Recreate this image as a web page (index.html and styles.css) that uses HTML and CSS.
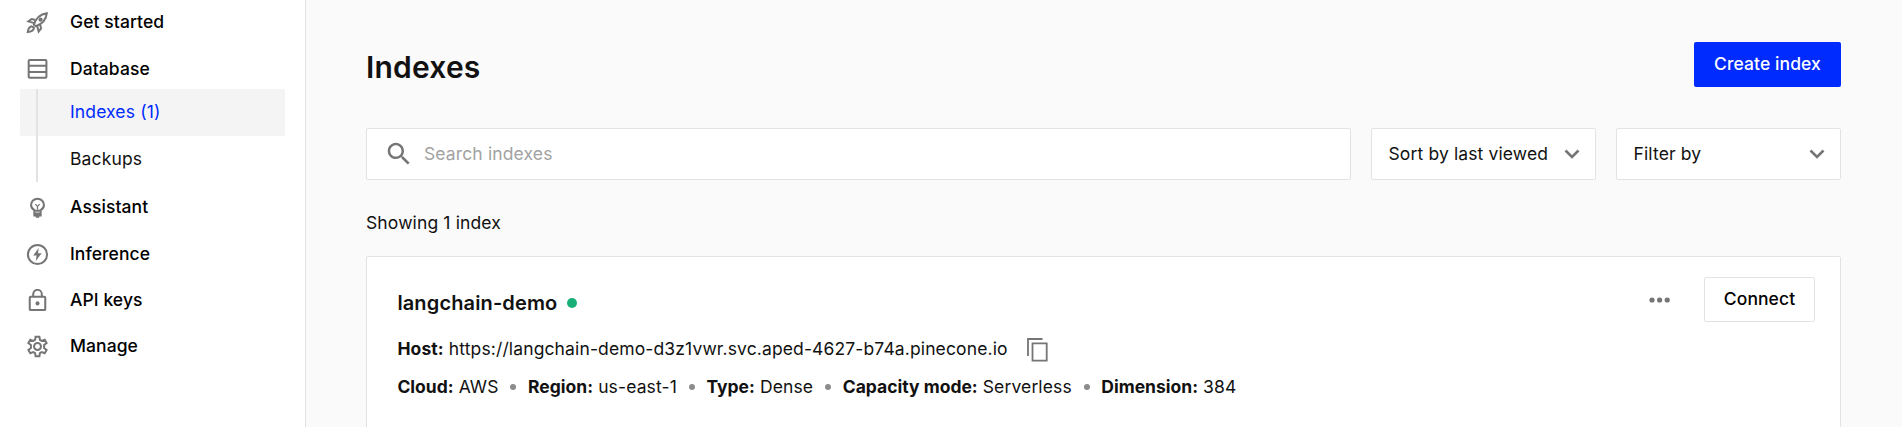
FILE: index.html
```html
<!DOCTYPE html>
<html lang="en">
<head>
<meta charset="utf-8">
<title>Indexes</title>
<link rel="stylesheet" href="styles.css">
</head>
<body>
<div class="app">
  <nav class="sidebar">
    <a class="item first"><svg class="icon" viewBox="0 0 24 24"><path d="M8.2 14.2C10.2 7.700 15 3.300 21.700 2.300C21 9 16.600 13.900 10.200 15.900ZM9.200 9.200L5.800 8.400L2.500 10.800L7.900 12.400M15 14.700L15.700 18.200L13.200 21.500L11.800 16.100M6.300 15.900C3.800 16.200 2.300 18.200 1.800 22C5.500 21.700 8 20.200 8.300 17.700L6.300 15.900"/><circle class="fill" cx="15.200" cy="9" r="2.200"/></svg><span>Get started</span></a>
    <a class="item database"><svg class="icon" viewBox="0 0 24 24"><rect x="2.800" y="2" width="18.500" height="18.500" rx="1"/><path d="M3 8.200H21M3 14.500H21"/></svg><span>Database</span></a>
    <div class="children">
      <a class="child active">Indexes (1)</a>
      <a class="child">Backups</a>
    </div>
    <a class="item assistant"><svg class="icon" viewBox="0 0 24 24"><path d="M8.800 15.400V14.800C6.700 13.800 5.300 12 5.300 9.500A6.700 6.700 0 0 1 18.700 9.500C18.700 12 17.300 13.800 15.200 14.800V15.400Z"/><path d="M8.700 16V20.300H15.300V16M8.700 18.200H15.300M10.200 21.700H13.800"/><path class="thin" d="M12 14.300V10.800M9.700 8.500L12 10.800L14.300 8.500"/></svg><span>Assistant</span></a>
    <a class="item"><svg class="icon" viewBox="0 0 24 24"><circle cx="12" cy="12" r="10"/><path class="fill" d="M13.200 5.200L7.500 13.100H11L10.200 18.900L16.400 10.600H12.600Z"/></svg><span>Inference</span></a>
    <a class="item keys"><svg class="icon" viewBox="0 0 24 24"><rect x="3.900" y="8" width="16.200" height="14" rx="1"/><path d="M7.500 8V5.400A4.500 4.500 0 0 1 16.500 5.400V8"/><circle class="fill" cx="12" cy="15" r="2.100"/></svg><span>API keys</span></a>
    <a class="item manage"><svg class="icon" viewBox="0 0 24 24"><path d="M10 1.800H14L14.500 5.100L16.400 6.200L19.500 5L21.500 8.400L18.900 10.500V13.500L21.500 15.600L19.500 19L16.400 17.800L14.500 18.900L14 22.200H10L9.500 18.900L7.600 17.800L4.500 19L2.500 15.600L5.100 13.500V10.500L2.500 8.400L4.500 5L7.600 6.200L9.500 5.100Z"/><circle cx="12" cy="12" r="3.600"/></svg><span>Manage</span></a>
  </nav>
  <main class="main">
    <header class="header">
      <h1 class="title">Indexes</h1>
      <button class="create">Create index</button>
    </header>
    <div class="filters">
      <div class="search"><svg class="search-icon" viewBox="0 0 24 24"><path d="M15.500 14h-.79l-.28-.27C15.410 12.590 16 11.110 16 9.500 16 5.910 13.090 3 9.500 3S3 5.910 3 9.500 5.910 16 9.500 16c1.610 0 3.090-.59 4.230-1.570l.27.28v.79l5 4.990L20.490 19l-4.990-5zm-6 0C7.010 14 5 11.990 5 9.500S7.010 5 9.500 5 14 7.010 14 9.500 11.990 14 9.500 14z"/></svg><span>Search indexes</span></div>
      <div class="select"><span>Sort by last viewed</span><svg class="chevron" viewBox="0 0 16 10"><path d="M1.500 1.500L8 8L14.500 1.500"/></svg></div>
      <div class="select"><span>Filter by</span><svg class="chevron" viewBox="0 0 16 10"><path d="M1.500 1.500L8 8L14.500 1.500"/></svg></div>
    </div>
    <p class="count">Showing 1 index</p>
    <section class="card">
      <div class="details">
        <div class="name"><span>langchain-demo</span><i class="status"></i></div>
        <div class="host"><span><b>Host:</b> https://langchain-demo-d3z1vwr.svc.aped-4627-b74a.pinecone.io</span><svg class="copy" viewBox="0 0 21 24"><path d="M1 18V1H15.500M5.500 5.300H19.700V22.700H5.500Z"/></svg></div>
        <div class="meta"><span><b>Cloud:</b> AWS</span><i class="dot"></i><span><b>Region:</b> us-east-1</span><i class="dot"></i><span><b>Type:</b> Dense</span><i class="dot"></i><span><b>Capacity mode:</b> Serverless</span><i class="dot"></i><span><b>Dimension:</b> 384</span></div>
      </div>
      <div class="actions">
        <svg class="more" viewBox="0 0 22 6"><circle cx="3" cy="3" r="2.600"/><circle cx="10.600" cy="3" r="2.600"/><circle cx="18.200" cy="3" r="2.600"/></svg>
        <button class="connect">Connect</button>
      </div>
    </section>
  </main>
</div>
</body>
</html>
```
FILE: styles.css
```css
* { box-sizing: border-box; }
body { margin: 0; font: 400 17.5px/26px Inter, "Liberation Sans", sans-serif; letter-spacing: .13px; color: #111; }
button { font: inherit; font-weight: 500; letter-spacing: .08px; padding: 0 0 2px; border-radius: 2px; }
b { font-weight: 700; letter-spacing: 0; }
.app { display: flex; height: 427px; overflow: hidden; background: #fafafa; }
.sidebar { width: 306px; flex: none; background: #fff; border-right: 1px solid #e3e3e3; padding: 0 20px; }
.item { display: flex; align-items: center; height: 46px; padding-left: 6px; gap: 21px; font-weight: 500; letter-spacing: .08px; color: #000; }
.first { padding-bottom: 2px; }
.database { height: 43px; padding-top: 3px; }
.icon { width: 23px; height: 23px; flex: none; fill: none; stroke: #757575; stroke-width: 2.1; }
.icon .fill { fill: #757575; stroke: none; }
.icon .thin { stroke-width: 1.3; }
.children { background: linear-gradient(#e3e3e3, #e3e3e3) 16px 0 / 2px 93px no-repeat; height: 93px; }
.child { display: flex; align-items: center; height: 46px; padding-left: 50px; border-radius: 2px; }
.active { height: 47px; padding-bottom: 2px; color: #002bff; background: linear-gradient(#e3e3e3, #e3e3e3) 16px 0 / 2px 100% no-repeat #f4f4f4; }
.assistant { height: 49px; padding-top: 1px; }
.main { flex: 1; padding: 42px 61px 0 60px; }
.header { display: flex; justify-content: space-between; height: 86px; }
.title { margin: 6px 0 0; font-size: 30px; line-height: 38px; font-weight: 600; letter-spacing: .2px; }
.create { width: 147px; height: 45px; border: 0; background: #002bff; color: #fff; }
.filters { display: flex; gap: 20px; }
.search, .select { display: flex; align-items: center; height: 52px; border: 1px solid #e3e3e3; border-radius: 2px; background: #fff; }
.search { flex: 1; color: #a2a2a2; padding-left: 17px; gap: 10px; }
.search-icon { width: 30px; height: 30px; fill: #757575; }
.select { width: 225px; justify-content: space-between; padding: 0 15px 0 16.5px; }
.chevron { width: 16px; height: 10px; fill: none; stroke: #757575; stroke-width: 2.600; }
.count { margin: 30px 0 20px; }
.card { display: flex; justify-content: space-between; height: 200px; border: 1px solid #e3e3e3; border-radius: 2px; background: #fff; padding: 20px 25px 0 30.4px; }
.details { padding-top: 13px; }
.name { display: flex; align-items: center; gap: 10px; font-size: 20px; font-weight: 600; height: 26px; }
.status { width: 10px; height: 10px; border-radius: 50%; background: #19b077; }
.host { display: flex; align-items: center; gap: 19px; height: 26px; margin-top: 20px; }
.host b { letter-spacing: .1px; }
.copy { width: 21px; height: 24px; margin-top: 1px; fill: none; stroke: #757575; stroke-width: 1.800; }
.meta { display: flex; align-items: center; gap: 11.75px; height: 26px; margin-top: 12px; }
.dot { width: 6px; height: 6px; border-radius: 50%; background: #8c8c8c; }
.actions { display: flex; align-items: center; height: 45px; gap: 33px; }
.more { width: 22px; height: 6px; fill: #757575; }
.connect { width: 111px; height: 45px; border: 1px solid #e3e3e3; background: #fff; color: #000; }
```
